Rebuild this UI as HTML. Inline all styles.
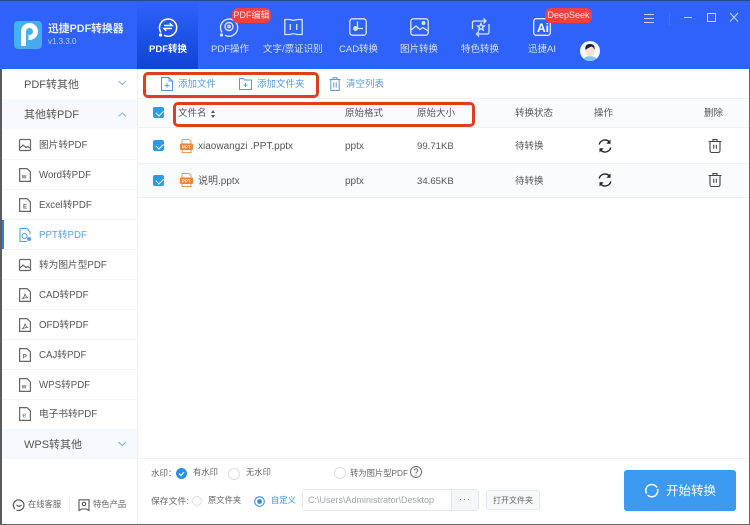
<!DOCTYPE html>
<html lang="zh"><head><meta charset="utf-8"><title>迅捷PDF转换器</title>
<style>
*{box-sizing:border-box}
html,body{margin:0;padding:0;background:#fff}
body{width:750px;height:525px;position:relative;overflow:hidden;font-family:"Liberation Sans","Noto Sans CJK SC",sans-serif;color:#444}
.a{position:absolute;white-space:nowrap}
svg{position:absolute;overflow:visible;fill:none}
.tab{position:absolute;top:43px;font-size:9.5px;line-height:14px;color:#d5e0ff;white-space:nowrap;text-align:center}
.si{position:absolute;left:39px;font-size:9.7px;line-height:14px;color:#555;white-space:nowrap}
.sl{position:absolute;left:2px;width:135px;height:1px;background:#f3f4f6}
.h{position:absolute;font-size:9.5px;line-height:14px;color:#555;white-space:nowrap}
.c{position:absolute;font-size:10px;line-height:14px;color:#555;white-space:nowrap}
.cb{position:absolute;left:153px;width:11px;height:11px;background:#2a9be8;border-radius:2px}
.cb:after{content:"";position:absolute;left:2.5px;top:2.5px;width:6px;height:3.5px;border-left:1.5px solid #fff;border-bottom:1.5px solid #fff;transform:rotate(-45deg)}
.doc{stroke:#666;stroke-width:1.2}
.blue{color:#5a97e0}
.small{position:absolute;font-size:8.3px;line-height:12px;color:#666;white-space:nowrap}
.radio{position:absolute;width:12px;height:12px;border-radius:50%;border:1px solid #ddd;background:#fff}
</style></head><body>
<!-- header -->
<div class="a" style="left:0;top:0;width:750px;height:69px;background:#2f62fb;border-top:1px solid #28479c"></div>
<div class="a" style="left:137px;top:1px;width:61px;height:68px;background:linear-gradient(#2f62fb,#0d44d6)"></div>
<!-- logo -->
<svg style="left:14px;top:21px" width="28" height="28" viewBox="0 0 28 28"><defs><linearGradient id="lg" x1="0" y1="0" x2="1" y2="1"><stop offset="0" stop-color="#3fb8f0"/><stop offset="1" stop-color="#4aa6f0"/></linearGradient></defs><rect width="28" height="28" rx="4" fill="url(#lg)"/><path d="M9.500 25V10.500a6 6 0 1 1 6 6h-1" stroke="#fff" stroke-width="5"/></svg>
<div class="a" style="left:48px;top:21px;font-size:10.8px;line-height:16px;font-weight:bold;color:#e6edff">迅捷PDF转换器</div>
<div class="a" style="left:48px;top:36px;font-size:8px;line-height:11px;color:#b9ccff">v1.3.3.0</div>
<!-- tab icons -->
<svg style="left:158px;top:17px" width="20" height="20" viewBox="0 0 20 20" stroke="#fff" stroke-width="1.500"><path d="M3 15.500a8.600 8.600 0 1 1 3 2.700"/><circle cx="2.500" cy="18" r=".9"/><path d="M6 8.500h8l-2.300-2.300M14 11.500H6l2.300 2.300"/></svg>
<svg style="left:219px;top:17px" width="20" height="20" viewBox="0 0 20 20" stroke="#dbe4ff" stroke-width="1.400"><path d="M3 15.500a8.600 8.600 0 1 1 3 2.700"/><circle cx="2.500" cy="18" r=".9"/><circle cx="10" cy="9.500" r="4"/><circle cx="10" cy="9.500" r="1.200"/></svg>
<svg style="left:284px;top:18px" width="19" height="18" viewBox="0 0 19 18" stroke="#dbe4ff" stroke-width="1.300"><path d="M.8 1.500h5q3.700 1.500 7.400 0h5v15h-5q-3.700-1.500-7.400 0h-5z"/><path d="M6.300 6v6M12.700 6v6"/></svg>
<svg style="left:349px;top:18px" width="18" height="18" viewBox="0 0 18 18" stroke="#dbe4ff" stroke-width="1.300"><rect x=".8" y=".8" width="16.400" height="16.400" rx="2.500"/><path d="M8.500 3.500v7M5 10.500h9"/><circle cx="6.500" cy="10.500" r="1.800" fill="#dbe4ff"/></svg>
<svg style="left:410px;top:18px" width="19" height="18" viewBox="0 0 19 18" stroke="#dbe4ff" stroke-width="1.300"><rect x=".8" y=".8" width="17.400" height="16.400" rx="2.500"/><path d="M1 12l5-4 4 3.500 3-2 5 3.500"/><circle cx="13.500" cy="5" r="1.300" fill="#dbe4ff"/></svg>
<svg style="left:471px;top:17px" width="20" height="20" viewBox="0 0 20 20" stroke="#dbe4ff" stroke-width="1.300"><path d="M1.500 12V6q0-2 2-2H14M18 7v8q0 2-2 2H7M12.500 1.500L15 4l-2.500 2.500M8 14.500L5.500 17 8 19.500"/><path d="M10 6.500l1 2.300 2.400.2-1.800 1.600.6 2.400-2.200-1.300-2.200 1.300.6-2.400L6.600 9l2.400-.2z"/></svg>
<svg style="left:533px;top:18px" width="18" height="18" viewBox="0 0 18 18" stroke="#e6edff" stroke-width="1.300"><rect x=".7" y=".7" width="16.600" height="16.600" rx="2.500"/></svg>
<div class="a" style="left:537px;top:21px;font-size:12px;line-height:14px;font-weight:bold;color:#fff">Ai</div>
<!-- badges -->
<div class="a" style="left:232px;top:8px;width:39px;height:15px;border-radius:6px;background:#f0403f;color:#ffe3e3;font-size:9px;line-height:15px;text-align:center">PDF编辑</div>
<div class="a" style="left:545px;top:8px;width:47px;height:15px;border-radius:6px;background:#f0403f;color:#ffe3e3;font-size:9px;line-height:15px;text-align:center">DeepSeek</div>
<div class="tab" style="left:149px;color:#fff;font-weight:bold">PDF转换</div>
<div class="tab" style="left:211px">PDF操作</div>
<div class="tab" style="left:263px">文字/票证识别</div>
<div class="tab" style="left:339px">CAD转换</div>
<div class="tab" style="left:400px">图片转换</div>
<div class="tab" style="left:461px">特色转换</div>
<div class="tab" style="left:528px">迅捷AI</div>
<!-- avatar -->
<svg style="left:580px;top:41px" width="20" height="20" viewBox="0 0 20 20"><circle cx="10" cy="10" r="10" fill="#f4f7fb"/><path d="M3.500 17.500q6.500-5 13 0A10 10 0 0 1 3.500 17.500z" fill="#7cc6ea"/><ellipse cx="10" cy="10" rx="4.500" ry="5.500" fill="#fde0cb"/><path d="M5.500 9q-1-6 4.500-6t4.500 6q-1-3-3-3.500-3 1-6 3.500z" fill="#182233"/></svg>
<!-- window controls -->
<svg style="left:644px;top:13px" width="100" height="14" viewBox="0 0 100 14" stroke="#c8d6ff" stroke-width="1"><path d="M0 1.500h10M0 5.500h10M0 9.500h10"/><path d="M25.500 0v12" stroke="#4a76f5"/><path d="M40 4.500h8"/><rect x="63.500" y=".5" width="8" height="8"/><path d="M86 0l8 8.500M94 0l-8 8.500"/></svg>

<!-- sidebar -->
<div class="a" style="left:0;top:69px;width:2px;height:456px;background:#5b5b5b"></div>
<div class="a" style="left:137px;top:69px;width:1px;height:455px;background:#edeff2"></div>
<div class="a" style="left:2px;top:99px;width:135px;height:30px;background:#f6f9fd"></div>
<div class="a" style="left:2px;top:429px;width:135px;height:30px;background:#f6f9fd"></div>
<div class="a" style="left:24px;top:77px;font-size:11px;line-height:16px;color:#555">PDF转其他</div>
<div class="a" style="left:24px;top:107px;font-size:11px;line-height:16px;color:#555">其他转PDF</div>
<div class="a" style="left:24px;top:437px;font-size:11px;line-height:16px;color:#555">WPS转其他</div>
<svg style="left:118px;top:80px" width="9" height="6" stroke="#90b6e0" stroke-width="1.100"><path d="M.5 1l3.800 3.500L8 1"/></svg>
<svg style="left:118px;top:112px" width="9" height="6" stroke="#90b6e0" stroke-width="1.100"><path d="M.5 4.500L4.300 1 8 4.500"/></svg>
<svg style="left:118px;top:441px" width="9" height="6" stroke="#70b0e8" stroke-width="1.100"><path d="M.5 1l3.800 3.500L8 1"/></svg>
<div class="sl" style="top:159px"></div><div class="sl" style="top:189px"></div><div class="sl" style="top:219px"></div><div class="sl" style="top:249px"></div><div class="sl" style="top:279px"></div><div class="sl" style="top:309px"></div><div class="sl" style="top:339px"></div><div class="sl" style="top:369px"></div><div class="sl" style="top:399px"></div>
<div class="a" style="left:2px;top:220px;height:29px;background:#2a7fd8;width:1.500px"></div>
<svg class="doc" style="left:19px;top:139px" width="12" height="12" viewBox="0 0 12 12"><rect x=".5" y=".5" width="11" height="11" rx="1"/><path d="M1 9l3-3 3 2.500 1.500-1L11 9"/></svg>
<div class="si" style="top:139px">图片转PDF</div>
<svg class="doc" style="left:19px;top:168px" width="12" height="14" viewBox="0 0 12 14"><path d="M.6.600h7.400l3.400 3.400v9.400H.6z"/><text x="2.800" y="10.500" font-size="6" fill="#666" stroke="none" font-weight="bold">w</text></svg>
<div class="si" style="top:169px">Word转PDF</div>
<svg class="doc" style="left:19px;top:198px" width="12" height="14" viewBox="0 0 12 14"><path d="M.6.600h7.400l3.400 3.400v9.400H.6z"/><text x="4" y="10.500" font-size="6" fill="#666" stroke="none" font-weight="bold">E</text></svg>
<div class="si" style="top:199px">Excel转PDF</div>
<svg style="left:19px;top:228px" width="13" height="14" viewBox="0 0 13 14" stroke="#5a9fe8" stroke-width="1.100"><path d="M11 6V4L8 .6H1v12.800h7"/><circle cx="5.500" cy="8" r="2.500"/><circle cx="10" cy="11" r="1.500" fill="#5a9fe8"/></svg>
<div class="si" style="top:229px;color:#5a9fe8">PPT转PDF</div>
<svg class="doc" style="left:19px;top:259px" width="12" height="12" viewBox="0 0 12 12"><rect x=".5" y=".5" width="11" height="11" rx="1"/><path d="M1 9l3-3 3 2.500 1.500-1L11 9"/></svg>
<div class="si" style="top:259px">转为图片型PDF</div>
<svg class="doc" style="left:19px;top:288px" width="12" height="14" viewBox="0 0 12 14"><path d="M.6.600h7.400l3.400 3.400v9.400H.6z"/><path d="M3 11q2-1 3-5 1 3 3 3.500-3 0-6 1.500z" stroke-width=".8"/></svg>
<div class="si" style="top:289px">CAD转PDF</div>
<svg class="doc" style="left:19px;top:318px" width="12" height="14" viewBox="0 0 12 14"><path d="M.6.600h7.400l3.400 3.400v9.400H.6z"/><path d="M3 11q2-1 3-5 1 3 3 3.500-3 0-6 1.500z" stroke-width=".8"/></svg>
<div class="si" style="top:319px">OFD转PDF</div>
<svg class="doc" style="left:19px;top:348px" width="12" height="14" viewBox="0 0 12 14"><path d="M.6.600h7.400l3.400 3.400v9.400H.6z"/><text x="3.800" y="10.500" font-size="6" fill="#666" stroke="none" font-weight="bold">P</text></svg>
<div class="si" style="top:349px">CAJ转PDF</div>
<svg class="doc" style="left:19px;top:378px" width="12" height="14" viewBox="0 0 12 14"><path d="M.6.600h7.400l3.400 3.400v9.400H.6z"/><text x="2.800" y="10.500" font-size="6" fill="#666" stroke="none" font-weight="bold">w</text></svg>
<div class="si" style="top:379px">WPS转PDF</div>
<svg class="doc" style="left:19px;top:407px" width="12" height="14" viewBox="0 0 12 14"><path d="M.6.600h7.400l3.400 3.400v9.400H.6z"/><text x="3.400" y="10.500" font-size="7" fill="#666" stroke="none">e</text></svg>
<div class="si" style="top:408px">电子书转PDF</div>
<svg style="left:13px;top:499px" width="12" height="12" viewBox="0 0 12 12" stroke="#555" stroke-width="1.200"><path d="M2 10a5.300 5.300 0 1 1 1.500 1"/><path d="M3.500 6q2.500 2.500 5 0"/></svg>
<div class="small" style="left:28px;top:498px">在线客服</div>
<div class="a" style="left:69px;top:497px;width:1px;height:14px;background:#eee"></div>
<svg style="left:78px;top:499px" width="12" height="12" viewBox="0 0 12 12" stroke="#555" stroke-width="1.100"><path d="M1 .800h10V11.500L8.500 10h-5L1 11.500z"/><circle cx="6" cy="5" r="1.700"/></svg>
<div class="small" style="left:93px;top:498px">特色产品</div>

<!-- toolbar -->
<div class="a" style="left:143px;top:72px;width:176px;height:26px;border:3px solid #e23c1e;border-radius:5px"></div>
<svg style="left:161px;top:77px" width="12" height="14" viewBox="0 0 12 14" stroke="#5a97e0" stroke-width="1"><path d="M.5.500h7.500l3.500 3.500v9.500H.5zM8 .5v3.500h3.500M3.800 8.500h4.400M6 6.300v4.400"/></svg>
<div class="a blue" style="left:178px;top:78px;font-size:9.5px;line-height:14px">添加文件</div>
<svg style="left:239px;top:78px" width="13" height="12" viewBox="0 0 13 12" stroke="#5a97e0" stroke-width="1"><path d="M.5 11.500V.500h4l1 1.500h7v9.500z"/><path d="M4.500 7h4M6.500 5v4"/></svg>
<div class="a blue" style="left:257px;top:78px;font-size:9.5px;line-height:14px">添加文件夹</div>
<svg style="left:329px;top:77px" width="12" height="14" viewBox="0 0 12 14" stroke="#5a97e0" stroke-width="1"><path d="M.5 2.500h11M4 2.500V.8h4v1.700M1.800 2.500v11h8.400v-11M4.800 5.500v5M7.200 5.500v5"/></svg>
<div class="a blue" style="left:346px;top:78px;font-size:9.5px;line-height:14px">清空列表</div>

<!-- table -->
<div class="a" style="left:138px;top:98px;width:611px;height:30px;background:#fafbfc;border-top:1px solid #f0f1f3;border-bottom:1px solid #f0f1f3"></div>
<div class="a" style="left:138px;top:163px;width:611px;height:35px;background:#fafbfc;border-top:1px solid #f0f1f3;border-bottom:1px solid #eeeff2"></div>
<div class="a" style="left:173px;top:102px;width:302px;height:25px;border:3px solid #e23c1e;border-radius:5px"></div>
<div class="cb" style="top:107px"></div><div class="cb" style="top:140px"></div><div class="cb" style="top:175px"></div>
<div class="h" style="left:178px;top:107px">文件名</div>
<svg style="left:211px;top:110px" width="4" height="8"><path d="M2 0l2 3H0zM2 8L0 5h4z" fill="#555"/></svg>
<div class="h" style="left:345px;top:107px">原始格式</div>
<div class="h" style="left:417px;top:107px">原始大小</div>
<div class="h" style="left:515px;top:107px">转换状态</div>
<div class="h" style="left:594px;top:107px">操作</div>
<div class="h" style="left:704px;top:107px">删除</div>

<svg style="left:180px;top:139px" width="13" height="14" viewBox="0 0 13 14"><path d="M2 .5h7l2 2V5M2 5V.5M2 10.500v3h9v-3" stroke="#f0944f"/><rect y="4.500" width="13" height="6.500" rx="1" fill="#f0833a"/><text x="2" y="9.500" font-size="4.500" fill="#fff" font-weight="bold">PPT</text></svg>
<svg style="left:180px;top:173px" width="13" height="14" viewBox="0 0 13 14"><path d="M2 .5h7l2 2V5M2 5V.5M2 10.500v3h9v-3" stroke="#f0944f"/><rect y="4.500" width="13" height="6.500" rx="1" fill="#f0833a"/><text x="2" y="9.500" font-size="4.500" fill="#fff" font-weight="bold">PPT</text></svg>
<div class="c" style="left:198px;top:140px">xiaowangzi .PPT.pptx</div>
<div class="c" style="left:198px;top:175px">说明.pptx</div>
<div class="c" style="left:345px;top:140px">pptx</div><div class="c" style="left:345px;top:175px">pptx</div>
<div class="c" style="left:417px;top:140px;font-size:9.600px">99.71KB</div><div class="c" style="left:417px;top:175px;font-size:9.600px">34.65KB</div>
<div class="h" style="left:515px;top:140px">待转换</div><div class="h" style="left:515px;top:175px">待转换</div>
<svg style="left:598px;top:139px" width="14" height="14" viewBox="0 0 14 14" stroke="#222" stroke-width="1.400"><path d="M1.200 5.500A6 6 0 0 1 11 2.500M12.800 8.500A6 6 0 0 1 3 11.500"/><path d="M12.500 .5v4.200H8.300zM1.500 13.500V9.300h4.200z" fill="#222" stroke="none"/></svg>
<svg style="left:598px;top:173px" width="14" height="14" viewBox="0 0 14 14" stroke="#222" stroke-width="1.400"><path d="M1.200 5.500A6 6 0 0 1 11 2.500M12.800 8.500A6 6 0 0 1 3 11.500"/><path d="M12.500 .5v4.200H8.300zM1.500 13.500V9.300h4.200z" fill="#222" stroke="none"/></svg>
<svg style="left:708px;top:139px" width="14" height="14" viewBox="0 0 14 14" stroke="#444" stroke-width="1.100"><path d="M.5 2.500h13M5 2.500V.6h4v1.900M2 2.500v9q0 2 2 2h6q2 0 2-2v-9M5.700 5.800v4M8.300 5.800v4"/></svg>
<svg style="left:708px;top:173px" width="14" height="14" viewBox="0 0 14 14" stroke="#444" stroke-width="1.100"><path d="M.5 2.500h13M5 2.500V.6h4v1.900M2 2.500v9q0 2 2 2h6q2 0 2-2v-9M5.700 5.800v4M8.300 5.800v4"/></svg>

<!-- bottom -->
<div class="a" style="left:138px;top:458px;width:611px;height:1px;background:#f0f1f3"></div>
<div class="small" style="left:151px;top:467px;font-size:8.5px">水印：</div>
<svg style="left:176px;top:468px" width="11" height="11" viewBox="0 0 11 11"><circle cx="5.500" cy="5.500" r="5.500" fill="#2a8de6"/><path d="M3 5.500l2 2 3-3.500" stroke="#fff" stroke-width="1.200"/></svg>
<div class="small" style="left:193px;top:466px">有水印</div>
<div class="radio" style="left:228px;top:468px"></div>
<div class="small" style="left:246px;top:466px">无水印</div>
<div class="radio" style="left:334px;top:467px"></div>
<div class="small" style="left:350px;top:467px">转为图片型PDF</div>
<svg style="left:410px;top:466px" width="12" height="12" viewBox="0 0 12 12" stroke="#666" stroke-width=".9"><circle cx="6" cy="6" r="5.500"/><path d="M4.300 4.500a1.700 1.700 0 1 1 2.500 1.500Q6 6.500 6 7.500M6 8.500v1"/></svg>
<div class="small" style="left:151px;top:495px;font-size:8.800px">保存文件:</div>
<div class="radio" style="left:192px;top:496px;width:10px;height:10px"></div>
<div class="small" style="left:208px;top:494px">原文件夹</div>
<svg style="left:254px;top:496px" width="11" height="11" viewBox="0 0 11 11"><circle cx="5.500" cy="5.500" r="4.800" stroke="#2a8de6"/><circle cx="5.500" cy="5.500" r="2.400" fill="#2a8de6"/></svg>
<div class="small" style="left:271px;top:494px;color:#3b8ee6">自定义</div>
<div class="a" style="left:302px;top:489px;width:149px;height:22px;background:#fff;border:1px solid #e4e7ed;border-right:none;border-radius:3px 0 0 3px;padding-left:5px;font-size:9px;line-height:20px;color:#a0a4aa">C:\Users\Administrator\Desktop</div>
<div class="a" style="left:451px;top:489px;width:28px;height:22px;background:#f5f6f8;border:1px solid #e4e7ed;border-radius:0 3px 3px 0;text-align:center;font-size:9px;line-height:18px;color:#666;letter-spacing:1px">···</div>
<div class="a" style="left:486px;top:490px;width:54px;height:20px;background:#f7f8fa;border:1px solid #e4e7ed;border-radius:3px;text-align:center;font-size:8px;line-height:19px;color:#666">打开文件夹</div>
<div class="a" style="left:624px;top:470px;width:112px;height:41px;background:#3c9af0;border-radius:3px"></div>
<svg style="left:645px;top:484px" width="14" height="14" viewBox="0 0 14 14" stroke="#fff" stroke-width="1.500"><path d="M1.500 9.500A6 6 0 0 1 12 3.500M12.500 5A6 6 0 0 1 2.500 11"/></svg>
<div class="a" style="left:666px;top:483px;font-size:12.500px;line-height:17px;color:#fff">开始转换</div>
<!-- window edges -->
<div class="a" style="left:749px;top:69px;width:1px;height:456px;background:#666"></div>
<div class="a" style="left:0;top:524px;width:750px;height:1px;background:#666"></div>
</body></html>
